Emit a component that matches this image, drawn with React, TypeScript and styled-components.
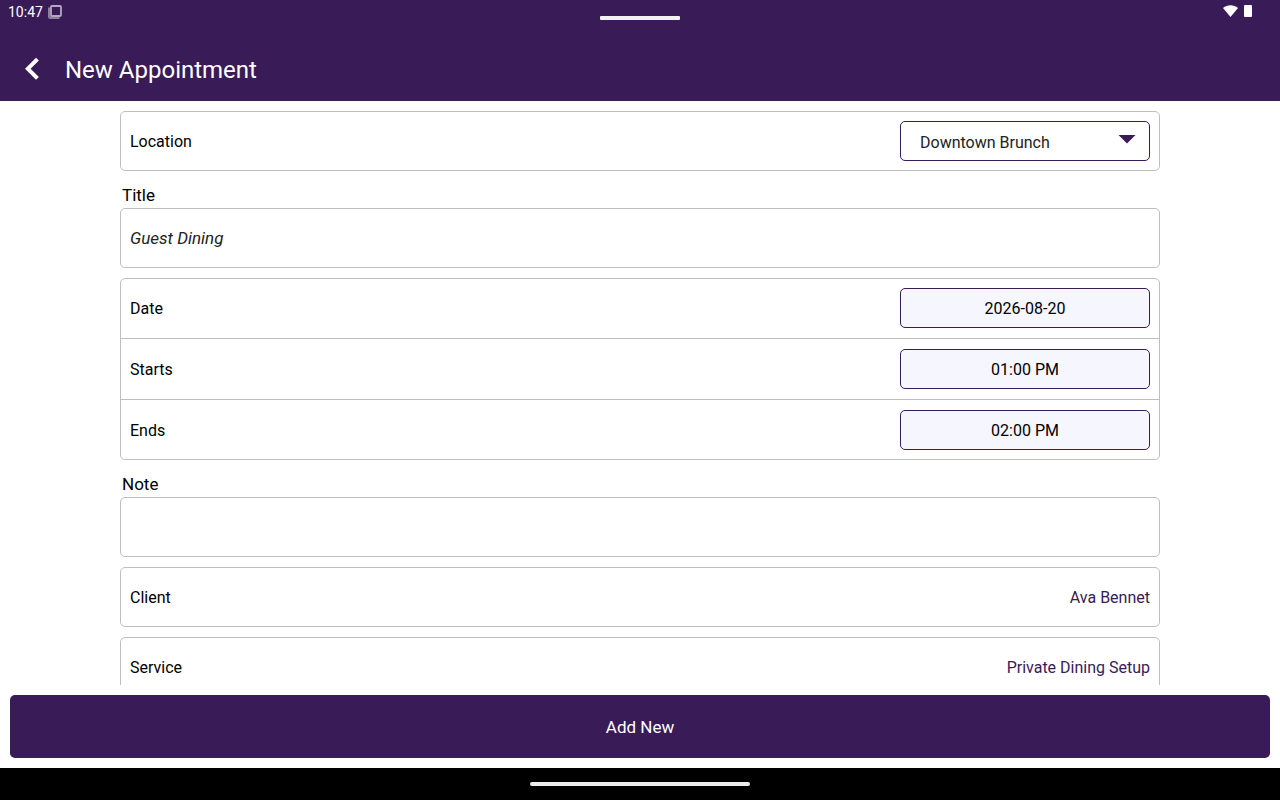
import React from "react";
import styled, { createGlobalStyle, css } from "styled-components";

const purple = "#381b57";
const line = "#bebebe";

const GlobalStyle = createGlobalStyle`
  *, *::before, *::after { box-sizing: border-box; }
  body { margin: 0; background: #fff; }
  body, button, input, select { font-family: Roboto, "Liberation Sans", sans-serif; }
`;

const Screen = styled.div`
  display: flex;
  flex-direction: column;
  height: 100vh;
  color: #000;
  font-size: 16px;
  line-height: 20px;
`;

const Header = styled.header`
  flex: none;
  background: ${purple};
  color: #fff;
`;

const StatusBar = styled.div`
  display: grid;
  grid-template-columns: 1fr auto 1fr;
  align-items: start;
  height: 36px;
  padding: 0 28px 0 8px;
`;

const StatusGroup = styled.div<{ $end?: boolean }>`
  display: flex;
  align-items: center;
  justify-content: ${(p) => (p.$end ? "flex-end" : "flex-start")};
  gap: 5px;
  height: ${(p) => (p.$end ? "22px" : "24px")};
  font-size: 14px;
`;

const Handle = styled.span`
  width: 80px;
  height: 4px;
  margin: 16px 0 0 20px;
  border-radius: 1px;
  background: #f2f2f2;
`;

const TitleBar = styled.div`
  display: flex;
  align-items: center;
  gap: 25px;
  height: 65px;
  padding: 0 24px;
`;

const BackButton = styled.button`
  display: flex;
  padding: 0;
  border: 0;
  background: none;
  color: inherit;
`;

const PageTitle = styled.h1`
  margin: 0;
  padding-top: 2px;
  font-size: 24px;
  font-weight: 400;
  line-height: 32px;
`;

const Content = styled.main`
  flex: 1;
  min-height: 0;
  overflow-y: auto;
  scrollbar-width: none;
`;

const Form = styled.form`
  display: flex;
  flex-direction: column;
  gap: 10px;
  width: 100%;
  max-width: 1040px;
  margin: 0 auto;
  padding: 10px 0;
`;

const frame = css`
  border: 1px solid ${line};
  border-radius: 5px;
  background: #fff;
`;

const Card = styled.div`
  ${frame}
  padding: 9px 0;
`;

const Row = styled.div`
  display: flex;
  align-items: center;
  justify-content: space-between;
  padding: 0 9px;

  & + & {
    margin-top: 10px;
    padding-top: 10px;
    border-top: 1px solid ${line};
  }
`;

const RowLabel = styled.label`
  padding-top: 2px;
`;

const Field = styled.div`
  display: flex;
  flex-direction: column;
`;

const FieldLabel = styled.label`
  padding: 4px 2px 3px;
  font-size: 17px;
`;

const TextInput = styled.input`
  ${frame}
  width: 100%;
  height: 60px;
  padding: 0 9px;
  color: #222;
  font-size: 17px;
  outline: 0;

  &::placeholder {
    color: #222;
    font-style: italic;
    opacity: 1;
  }
`;

const SelectBox = styled.div`
  position: relative;
  width: 250px;
`;

const Select = styled.select`
  display: block;
  width: 100%;
  height: 40px;
  padding: 2px 40px 0 19px;
  border: 1px solid ${purple};
  border-radius: 5px;
  background: #fff;
  color: #222;
  font-size: 16px;
  appearance: none;
`;

const Caret = styled.svg`
  position: absolute;
  top: 14px;
  right: 14px;
  pointer-events: none;
`;

const PickerButton = styled.button`
  width: 250px;
  height: 40px;
  padding: 0;
  border: 1px solid ${purple};
  border-radius: 5px;
  background: #f6f6ff;
  color: #000;
  font-size: 16px;
`;

const ValueButton = styled.button`
  height: 40px;
  padding: 0;
  border: 0;
  background: none;
  color: ${purple};
  font-size: 16px;
`;

const Footer = styled.footer`
  flex: none;
  padding: 10px;
`;

const SubmitButton = styled.button`
  display: block;
  width: 100%;
  height: 63px;
  border: 0;
  border-radius: 5px;
  background: ${purple};
  color: #fff;
  font-size: 17px;
`;

const NavBar = styled.div`
  display: flex;
  flex: none;
  align-items: center;
  justify-content: center;
  height: 32px;
  background: #000;
`;

const NavHandle = styled.span`
  width: 220px;
  height: 4px;
  border-radius: 2px;
  background: #ececec;
`;

const schedule = [
  { id: "date", label: "Date", value: "2026-08-20" },
  { id: "starts", label: "Starts", value: "01:00 PM" },
  { id: "ends", label: "Ends", value: "02:00 PM" },
];

const details = [
  { id: "client", label: "Client", value: "Ava Bennet" },
  { id: "service", label: "Service", value: "Private Dining Setup" },
];

export default function App() {
  return (
    <Screen>
      <GlobalStyle />
      <Header>
        <StatusBar>
          <StatusGroup>
            <span>10:47</span>
            <svg width="14" height="14" viewBox="0 0 14 14" fill="none" aria-hidden="true">
              <path d="M1.200 2.500V11.800q0 1 1 1h9.300" stroke="#8f7ea1" strokeWidth="2.4" />
              <rect x="3" y="1" width="10" height="10" rx="1" stroke="#b5a9c2" strokeWidth="1.800" />
            </svg>
          </StatusGroup>
          <Handle />
          <StatusGroup $end>
            <svg width="16" height="12" viewBox="0 0 16 12" fill="#fff" aria-hidden="true">
              <path d="M0 3C4.400-.700 10.600-.700 15 3L7.500 12Z" />
            </svg>
            <svg width="8" height="12" viewBox="0 0 8 12" fill="#fff" aria-hidden="true">
              <path d="M1 0h6q1 0 1 1v10q0 1-1 1H1q-1 0-1-1V1q0-1 1-1z" />
            </svg>
          </StatusGroup>
        </StatusBar>
        <TitleBar>
          <BackButton type="button" aria-label="Back">
            <svg width="16" height="24" viewBox="0 0 16 24" fill="#fff" aria-hidden="true">
              <path d="M12 .7 14.900 3.500 6.600 11.700 14.900 20 12 22.800 1 11.700Z" />
            </svg>
          </BackButton>
          <PageTitle>New Appointment</PageTitle>
        </TitleBar>
      </Header>

      <Content>
        <Form id="appointment" onSubmit={(e) => e.preventDefault()}>
          <Card>
            <Row>
              <RowLabel htmlFor="location">Location</RowLabel>
              <SelectBox>
                <Select id="location">
                  <option>Downtown Brunch</option>
                </Select>
                <Caret width="18" height="9" viewBox="0 0 18 9" aria-hidden="true">
                  <path d="M0.500 0h17L9 8.500z" fill={purple} />
                </Caret>
              </SelectBox>
            </Row>
          </Card>

          <Field>
            <FieldLabel htmlFor="title">Title</FieldLabel>
            <TextInput id="title" placeholder="Guest Dining" />
          </Field>

          <Card>
            {schedule.map((item) => (
              <Row key={item.id}>
                <RowLabel htmlFor={item.id}>{item.label}</RowLabel>
                <PickerButton id={item.id} type="button">
                  {item.value}
                </PickerButton>
              </Row>
            ))}
          </Card>

          <Field>
            <FieldLabel htmlFor="note">Note</FieldLabel>
            <TextInput id="note" />
          </Field>

          {details.map((item) => (
            <Card key={item.id}>
              <Row>
                <RowLabel htmlFor={item.id}>{item.label}</RowLabel>
                <ValueButton id={item.id} type="button">
                  {item.value}
                </ValueButton>
              </Row>
            </Card>
          ))}
        </Form>
      </Content>

      <Footer>
        <SubmitButton type="submit" form="appointment">
          Add New
        </SubmitButton>
      </Footer>
      <NavBar>
        <NavHandle />
      </NavBar>
    </Screen>
  );
}
